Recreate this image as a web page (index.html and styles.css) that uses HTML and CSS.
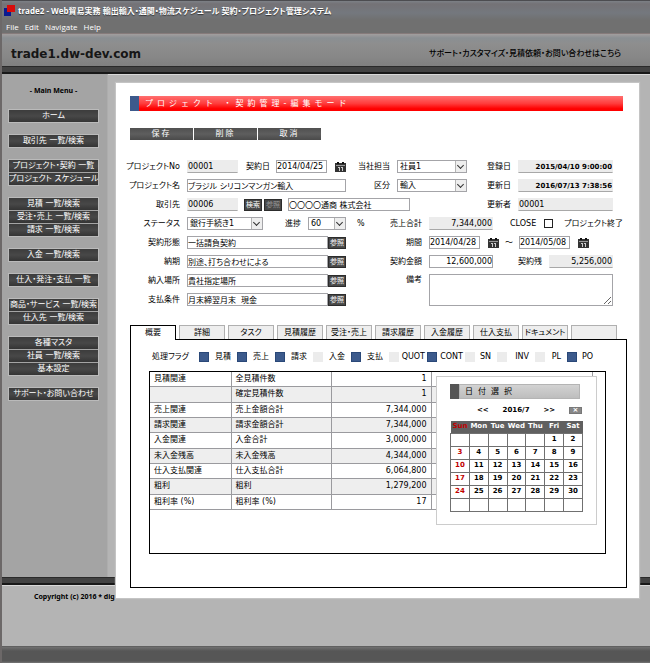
FILE: index.html
```html
<!DOCTYPE html>
<html lang="ja">
<head>
<meta charset="utf-8">
<title>trade2</title>
<link rel="stylesheet" href="styles.css">
</head>
<body>
<svg class="defs" width="0" height="0" aria-hidden="true">
  <symbol id="calendar" viewBox="0 0 11 10">
    <path d="M0 1h11v9H0z" fill="#333"/>
    <path d="M2 0h2v2H2zM7 0h2v2H7z" fill="#111"/>
    <path d="M1 3h9v1H1z" fill="#999"/>
    <path d="M3 5h2v1H3zM4 6h1v3H4zM6 5h2v1H6zM7 6h1v3H7z" fill="#ccc"/>
  </symbol>
</svg>
<div class="window">
  <header class="titlebar">
    <svg class="logo" viewBox="0 0 11 11" aria-hidden="true"><path d="M0 3h7v8H0z" fill="#0a1a90"/><path d="M3 0h8v7H3z" fill="#d80c0c"/></svg>
    <span>trade2 - Web貿易実務 輸出輸入・通関・物流スケジュール 契約・プロジェクト管理システム</span>
  </header>
  <nav class="menubar"><a href="#">File</a><a href="#">Edit</a><a href="#">Navigate</a><a href="#">Help</a></nav>
  <div class="banner">
    <h1>trade1.dw-dev.com</h1>
    <a href="#">サポート・カスタマイズ・見積依頼・お問い合わせはこちら</a>
  </div>
  <div class="bar"></div>
  <div class="workspace">
    <aside class="sidebar">
      <h2>- Main Menu -</h2>
      <nav class="main-menu">
        <div><a href="#">ホーム</a></div>
        <div><a href="#">取引先 一覧/検索</a></div>
        <div><a href="#">プロジェクト・契約 一覧</a><a href="#">プロジェクト スケジュール</a></div>
        <div><a href="#">見積 一覧/検索</a><a href="#">受注・売上 一覧/検索</a><a href="#">請求 一覧/検索</a></div>
        <div><a href="#">入金 一覧/検索</a></div>
        <div><a href="#">仕入・発注・支払 一覧</a></div>
        <div><a href="#">商品・サービス 一覧/検索</a><a href="#">仕入先 一覧/検索</a></div>
        <div><a href="#">各種マスタ</a><a href="#">社員 一覧/検索</a><a href="#">基本設定</a></div>
        <div><a href="#">サポート・お問い合わせ</a></div>
      </nav>
    </aside>
  </div>
  <div class="bar"></div>
  <footer class="footer">Copyright (c) 2016 * dig</footer>
  <div class="statusbar"></div>

  <main class="dialog">
    <h2 class="dialog-title">プロジェクト ・契約管理-編集モード</h2>
    <div class="actions"><button>保存</button><button>削除</button><button>取消</button></div>

    <form>
      <div class="rows">
        <div class="row">
          <label class="lead" for="no">プロジェクトNo</label>
          <input id="no" class="w-code ro" value="00001" readonly>
          <label class="date-label" for="cdate">契約日</label>
          <input id="cdate" class="w-date" value="2014/04/25">
          <button type="button" class="cal" aria-label="カレンダー"><svg><use href="#calendar"/></svg></button>
          <label class="push" for="staff">当社担当</label>
          <span class="select w-select"><select id="staff"><option>社員1</option></select></span>
          <label class="stamp-label" for="created">登録日</label>
          <input id="created" class="w-stamp ro stamp" value="2015/04/10 9:00:00" readonly>
        </div>
        <div class="row">
          <label class="lead" for="pname">プロジェクト名</label>
          <input id="pname" class="w-long" value="ブラジル シリコンマンガン輸入">
          <label class="push" for="kind">区分</label>
          <span class="select w-select"><select id="kind"><option>輸入</option></select></span>
          <label class="stamp-label" for="updated">更新日</label>
          <input id="updated" class="w-stamp ro stamp" value="2016/07/13 7:38:56" readonly>
        </div>
        <div class="row">
          <label class="lead" for="client">取引先</label>
          <input id="client" class="w-code ro" value="00006" readonly>
          <span class="pair"><button type="button" class="mini">検索</button><button type="button" class="mini" disabled>参照</button></span>
          <input class="w-client" aria-label="取引先名" value="〇〇〇〇通商 株式会社">
          <label class="push stamp-label" for="updater">更新者</label>
          <input id="updater" class="w-stamp ro" value="00001" readonly>
        </div>
      </div>
      <div class="lower">
        <div class="rows left">
          <div class="row">
            <label class="lead" for="status">ステータス</label>
            <span class="select w-status"><select id="status"><option>銀行手続き1</option></select></span>
            <label class="push" for="progress">進捗</label>
            <span class="select w-progress"><select id="progress"><option>60</option></select></span>
            <span class="unit">%</span>
          </div>
          <div class="row"><label class="lead" for="form">契約形態</label><span class="lookup"><input id="form" value="一括請負契約"><button type="button" class="mini">参照</button></span></div>
          <div class="row"><label class="lead" for="due">納期</label><span class="lookup"><input id="due" value="別途、打ち合わせによる"><button type="button" class="mini">参照</button></span></div>
          <div class="row"><label class="lead" for="place">納入場所</label><span class="lookup"><input id="place" value="貴社指定場所"><button type="button" class="mini">参照</button></span></div>
          <div class="row"><label class="lead" for="terms">支払条件</label><span class="lookup"><input id="terms" value="月末締翌月末  現金"><button type="button" class="mini">参照</button></span></div>
        </div>
        <div class="rows right">
          <div class="row">
            <label class="lead2" for="sales">売上合計</label>
            <input id="sales" class="w-amount ro num" value="7,344,000" readonly>
            <label class="close-label" for="close">CLOSE</label>
            <input id="close" type="checkbox" class="check">
            <span class="done">プロジェクト終了</span>
          </div>
          <div class="row">
            <label class="lead2" for="from">期間</label>
            <input id="from" class="w-date" value="2014/04/28">
            <button type="button" class="cal" aria-label="カレンダー"><svg><use href="#calendar"/></svg></button>
            <label class="tilde" for="to">～</label>
            <input id="to" class="w-date" value="2014/05/08">
            <button type="button" class="cal" aria-label="カレンダー"><svg><use href="#calendar"/></svg></button>
          </div>
          <div class="row">
            <label class="lead2" for="contract">契約金額</label>
            <input id="contract" class="w-amount num" value="12,600,000">
            <label class="rest-label" for="rest">契約残</label>
            <input id="rest" class="w-amount ro num" value="5,256,000" readonly>
          </div>
          <div class="row top">
            <label class="lead2" for="memo">備考</label>
            <textarea id="memo"></textarea>
          </div>
        </div>
      </div>
    </form>

    <div class="tabs">
      <button class="active">概要</button><button>詳細</button><button>タスク</button><button>見積履歴</button><button>受注・売上</button><button>請求履歴</button><button>入金履歴</button><button>仕入支払</button><button>ドキュメント</button><button aria-label="予備"></button>
    </div>
    <section class="panel">
      <div class="flags">
        <span class="flags-title">処理フラグ</span>
        <label><input type="checkbox" checked>見積</label>
        <label><input type="checkbox" checked>売上</label>
        <label><input type="checkbox" checked>請求</label>
        <label><input type="checkbox">入金</label>
        <label><input type="checkbox" checked>支払</label>
        <label class="wide"><input type="checkbox">QUOT</label>
        <label class="wide"><input type="checkbox" checked>CONT</label>
        <label class="short"><input type="checkbox">SN</label>
        <label><input type="checkbox">INV</label>
        <label class="short"><input type="checkbox">PL</label>
        <label class="short"><input type="checkbox" checked>PO</label>
      </div>
      <div class="summary">
        <table class="totals">
          <colgroup><col class="c1"><col class="c2"><col class="c3"><col></colgroup>
          <tr><td>見積関連</td><td>全見積件数</td><td>1</td><td></td></tr>
          <tr><td></td><td>確定見積件数</td><td>1</td><td></td></tr>
          <tr><td>売上関連</td><td>売上金額合計</td><td>7,344,000</td><td></td></tr>
          <tr><td>請求関連</td><td>請求金額合計</td><td>7,344,000</td><td></td></tr>
          <tr><td>入金関連</td><td>入金合計</td><td>3,000,000</td><td></td></tr>
          <tr><td>未入金残高</td><td>未入金残高</td><td>4,344,000</td><td></td></tr>
          <tr><td>仕入支払関連</td><td>仕入支払合計</td><td>6,064,800</td><td></td></tr>
          <tr><td>粗利</td><td>粗利</td><td>1,279,200</td><td></td></tr>
          <tr><td>粗利率 (%)</td><td>粗利率 (%)</td><td>17</td><td></td></tr>
        </table>
        <div class="picker">
          <h3>日付選択</h3>
          <div class="picker-nav"><button>&lt;&lt;</button><span>2016/7</span><button>&gt;&gt;</button><button class="x">×</button></div>
          <table class="days">
            <tr><th>Sun</th><th>Mon</th><th>Tue</th><th>Wed</th><th>Thu</th><th>Fri</th><th>Sat</th></tr>
            <tr><td></td><td></td><td></td><td></td><td></td><td>1</td><td>2</td></tr>
            <tr><td>3</td><td>4</td><td>5</td><td>6</td><td>7</td><td>8</td><td>9</td></tr>
            <tr><td>10</td><td>11</td><td>12</td><td>13</td><td>14</td><td>15</td><td>16</td></tr>
            <tr><td>17</td><td>18</td><td>19</td><td>20</td><td>21</td><td>22</td><td>23</td></tr>
            <tr><td>24</td><td>25</td><td>26</td><td>27</td><td>28</td><td>29</td><td>30</td></tr>
            <tr><td></td><td></td><td></td><td></td><td></td><td></td><td></td></tr>
          </table>
        </div>
      </div>
    </section>
  </main>
</div>
</body>
</html>
```
FILE: styles.css
```css
* { box-sizing: border-box; }
body {
  margin: 0;
  font: 8px/12px "DejaVu Sans", "Noto Sans CJK JP", sans-serif;
  font-feature-settings: "palt";
  color: #000;
  background: #b4b4b4;
}
button, input, select, textarea {
  font: inherit;
  font-feature-settings: inherit;
  color: inherit;
  margin: 0;
  padding: 0;
  border: 0;
  border-radius: 0;
}
a { color: inherit; text-decoration: none; }
h1, h2, h3 { margin: 0; }
.defs { position: absolute; }

.window {
  position: relative;
  display: flex;
  flex-direction: column;
  min-height: 100vh;
  border-left: 2px solid #6c6868;
}

/* frame */
.titlebar {
  display: flex;
  align-items: center;
  gap: 3px;
  height: 20px;
  padding: 0 2px;
  border-top: 1px solid #4c4c50;
  background: linear-gradient(#7c8086, #747276 3px, #74787e 12px, #707070);
  color: #fff;
  font: bold 8px/18px "Open Sans", "Noto Sans CJK JP", sans-serif;
  font-feature-settings: "palt";
  white-space: nowrap;
  text-shadow: 0 1px 1px #333;
}
.logo { width: 11px; height: 11px; flex: none; }
.menubar {
  display: flex;
  gap: 6px;
  height: 14px;
  padding: 0 4px;
  background: #707070;
  border-bottom: 1px solid #867b7b;
  color: #fff;
  font: 8px/14px "Open Sans", sans-serif;
}
.banner {
  display: flex;
  align-items: center;
  justify-content: space-between;
  height: 32px;
  padding: 7px 29px 0 9px;
  background: linear-gradient(#a29e9e, #8a8f93 4px, #8e8e8e 10px, #888 22px, #808080);
}
.banner h1 { font-size: 12px; line-height: 16px; color: #161616; }
.banner a { font-size: 8px; line-height: 16px; font-weight: 500; }
.bar {
  height: 8px;
  flex: none;
  background: #424242;
  border-top: 1px solid #2a2a2a;
  border-bottom: 2px solid #181818;
  box-shadow: 0 1px #d8d8d8;
}
.workspace { flex: 1; display: flex; }
.sidebar {
  width: 106px;
  padding: 11px 9px 0 7px;
  background: #a4a4a4;
  border-right: 1px solid #adadad;
}
.sidebar h2 { font: bold 7px/12px "Noto Sans", sans-serif; text-align: center; margin-bottom: 13px; }
.main-menu { display: flex; flex-direction: column; gap: 13px; }
.main-menu div { display: flex; flex-direction: column; gap: 1px; outline: 1px solid #bababa; }
.main-menu a {
  height: 12px;
  background: linear-gradient(#3c3c3c, #484848 50%, #343434);
  color: #fff;
  text-align: center;
  white-space: nowrap;
}
.footer { height: 61px; padding: 6px 32px; font: bold 7px/12px "Noto Sans", sans-serif; }
.statusbar {
  height: 17px;
  background: linear-gradient(#707070, #565656 4px, #565656 14px, #777);
  border-top: 1px solid #606060;
}

/* dialog */
.dialog {
  position: absolute;
  top: 83px;
  left: 114px;
  right: 11px;
  padding: 13px 12px 10px 14px;
  background: #fff;
  box-shadow: 0 0 1px 1px #c4c4c4;
}
.dialog-title {
  height: 15px;
  margin: 0 4px 17px 0;
  padding-left: 6px;
  border-left: 9px solid #3c5a8c;
  background: linear-gradient(#ff7070, #ff3c3c 50%, #f00 85%);
  color: #fff;
  font-size: 8px;
  line-height: 15px;
  font-weight: normal;
  font-feature-settings: normal;
  letter-spacing: 4px;
}
.actions { display: flex; gap: 1px; margin-bottom: 20px; }
.actions button {
  width: 63px;
  height: 12px;
  background: linear-gradient(#505050, #5e5e5e 50%, #4a4a4a);
  color: #fff;
  line-height: 12px;
  letter-spacing: 2px;
}

/* form */
.rows { display: flex; flex-direction: column; gap: 6px; }
.row { display: flex; align-items: center; height: 13px; white-space: nowrap; }
.row.top { align-items: flex-start; height: 32px; }
.row input, .row textarea, .select {
  height: 13px;
  border: 1px solid #a4a4a8;
  background: #fff;
  line-height: 11px;
  min-width: 0;
  flex: none;
}
.row .ro { background: #ececec; border-color: #ececec #ececec #a8a8a8; }
.row .num, .row .stamp { text-align: right; }
.row .stamp { font-size: 7px; font-weight: bold; }
.lead { width: 50px; margin-right: 7px; display: flex; justify-content: flex-end; flex: none; }
.w-code { width: 51px; }
.w-date { width: 51px; }
.w-long { width: 159px; }
.w-client { width: 122px; }
.w-select { width: 70px; }
.w-stamp { width: 95px; }
.w-status { width: 76px; }
.w-progress { width: 38px; }
.w-amount { width: 64px; }
.date-label { margin: 0 6px 0 8px; }
.push { margin-left: auto; margin-right: 7px; }
.row > .stamp-label { margin-right: 7px; margin-left: 20px; }
.row > .push.stamp-label { margin-left: auto; }
form > .rows .row { margin-right: 14px; }
form { margin-bottom: 19px; }
.cal { width: 11px; height: 12px; margin-left: 8px; background: none; flex: none; }
.cal svg { display: block; width: 11px; height: 10px; }
.select { position: relative; display: block; }
.select select {
  appearance: none;
  display: block;
  width: 100%;
  height: 11px;
  padding-left: 2px;
  background: none;
  line-height: 11px;
}
.select::before {
  content: "";
  position: absolute;
  top: 0;
  right: 0;
  width: 10px;
  height: 11px;
  background: #eee;
  border-left: 1px solid #b4b4b4;
}
.select::after {
  content: "";
  position: absolute;
  top: 2px;
  right: 3px;
  width: 4px;
  height: 4px;
  border: solid #333;
  border-width: 0 1px 1px 0;
  transform: rotate(45deg);
}
.pair { display: flex; gap: 2px; margin: 0 6px; }
.mini {
  width: 18px;
  height: 12px;
  background: #484848;
  border: 1px solid #2c2c2c;
  color: #fff;
  font-size: 7px;
  line-height: 10px;
  flex: none;
}
.mini:disabled { color: #999; }
.lower { display: flex; justify-content: space-between; margin-top: 6px; }
.lower .left { width: 216px; }
.left .push { margin-left: auto; }
.left .row:first-child { margin-right: -20px; }
.left .row:first-child .unit { width: 20px; padding-left: 11px; }
.lookup { display: flex; align-items: center; flex: 1; }
.lookup input { flex: 1; }
.right { width: 245px; }
.right .row { justify-content: flex-start; }
.lead2 { width: 40px; margin-right: 7px; text-align: right; flex: none; }
.close-label { margin: 0 8px 0 17px; }
.row .check {
  appearance: none;
  width: 9px;
  height: 9px;
  border: 1px solid #222;
}
.done { margin-left: 11px; }
.tilde { width: 20px; text-align: center; flex: none; }
.row > .rest-label { margin-left: auto; margin-right: 7px; }
.right .row:nth-child(3), .right .row:nth-child(4) { margin-right: 14px; }
.row textarea { flex: 1; height: 32px; resize: both; }

/* tabs */
.tabs { display: flex; gap: 3px; margin-right: 10px; }
.tabs button {
  flex: 1 1 0;
  min-width: 0;
  height: 14px;
  background: #eee;
  border: 1px solid #b0b0b0;
  border-bottom: 0;
  line-height: 14px;
  white-space: nowrap;
}
.tabs .active {
  position: relative;
  height: 15px;
  margin-bottom: -1px;
  background: #fff;
  border-color: #000;
}
.panel { border: 1px solid #000; padding: 11px 20px 33px 18px; }
.flags { display: flex; align-items: center; height: 12px; margin: 0 -10px 8px 3px; }
.flags-title { width: 47px; flex: none; }
.flags label {
  display: flex;
  align-items: center;
  justify-content: space-between;
  flex: 0 0 38px;
  padding-right: 6px;
}
.flags .short { flex-basis: 32px; }
.flags .wide { padding-right: 2px; }
.flags input { appearance: none; width: 10px; height: 10px; background: #ececec; flex: none; }
.flags input:checked { background: #3c5a8c; border: 1px solid #2a4878; }
.summary { position: relative; height: 183px; border: 1px solid #000; }
.totals {
  width: calc(100% - 12px);
  height: 138px;
  border-collapse: collapse;
  table-layout: fixed;
}
.totals td { border: 1px solid #9a9a9e; border-top: 0; padding: 0 4px; line-height: 12px; }
.totals td:first-child { border-left: 0; }
.totals td:nth-child(3) { text-align: right; }
.totals tr:nth-child(even) { background: #eee; }
.c1 { width: 81px; }
.c2 { width: 100px; }
.c3 { width: 100px; }

/* date picker */
.picker {
  position: absolute;
  top: 4px;
  right: 8px;
  width: 161px;
  padding: 7px 13px 12px;
  background: #fff;
  border: 1px solid #ccc;
}
.picker h3 {
  height: 15px;
  margin-right: 3px;
  padding-left: 6px;
  border-left: 9px solid #555;
  background: linear-gradient(#d4d4d4, #bcbcbc);
  box-shadow: inset 0 0 0 1px #b4b4b4;
  font-size: 8px;
  line-height: 15px;
  font-weight: normal;
  letter-spacing: 5px;
}
.picker-nav {
  display: flex;
  align-items: center;
  justify-content: space-between;
  height: 22px;
  padding: 0 1px 0 27px;
  font-size: 7px;
  font-weight: bold;
}
.picker-nav button { background: none; }
.picker-nav .x { width: 13px; height: 7px; background: #888; border: 1px solid #777; color: #fff; line-height: 5px; }
.days { width: 100%; height: 90px; border-collapse: collapse; table-layout: fixed; font-size: 7px; line-height: 9px; font-weight: bold; text-align: center; }
.days th { height: 12px; background: #606060; color: #fff; padding: 0; }
.days td { height: 13px; border: 1px solid #707070; padding: 0; }
.days tr :first-child { color: #c00000; }
```
